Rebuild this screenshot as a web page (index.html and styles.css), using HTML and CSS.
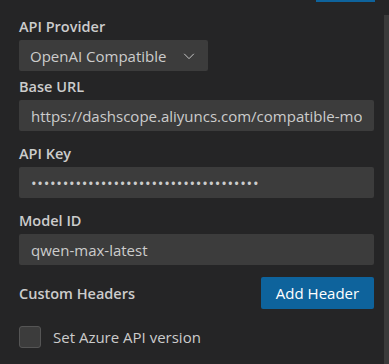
FILE: index.html
```html
<!DOCTYPE html>
<html lang="en">
<head>
    <meta charset="UTF-8">
    <meta name="viewport" content="width=device-width, initial-scale=1.0">
    <title>API Settings</title>
    <link rel="stylesheet" href="styles.css">
</head>
<body>
    <div class="settings-panel">
        <div class="top-button-edge"></div>

        <div class="field field-select">
            <label for="apiProvider">API Provider</label>
            <div class="select-box" id="apiProvider">
                <span>OpenAI Compatible</span>
                <svg class="chevron" width="14" height="14" viewBox="0 0 16 16">
                    <path d="M2.5 5.5 L8 11 L13.5 5.5" fill="none" stroke="#cccccc" stroke-width="1.1"/>
                </svg>
            </div>
        </div>

        <div class="field">
            <label for="baseUrl">Base URL</label>
            <input type="text" id="baseUrl" class="text-input" value="https://dashscope.aliyuncs.com/compatible-mode/v1">
        </div>

        <div class="field">
            <label for="apiKey">API Key</label>
            <input type="password" id="apiKey" class="text-input password" value="sk-0123456789abcdef0123456789abcdef0">
        </div>

        <div class="field">
            <label for="modelId">Model ID</label>
            <input type="text" id="modelId" class="text-input" value="qwen-max-latest">
        </div>

        <div class="headers-row">
            <span class="headers-title">Custom Headers</span>
            <button class="primary-btn">Add Header</button>
        </div>

        <label class="check-row">
            <span class="check-box"></span>
            <span>Set Azure API version</span>
        </label>
    </div>
    <div class="scrollbar"></div>
</body>
</html>
```

FILE: styles.css
```css
body {
    margin: 0;
    background-color: #252526;
    color: #cccccc;
    font-family: "Open Sans", "Noto Sans", sans-serif;
    font-size: 14.5px;
    overflow: hidden;
}

.settings-panel {
    padding: 0 15px 0 19px;
}

.top-button-edge {
    width: 59px;
    height: 2px;
    margin: 0 -1px 0 auto;
    background-color: #0e639c;
}

.field {
    margin-top: 13px;
}

.field-select {
    margin-top: 15px;
}

.field-select + .field {
    margin-top: 6px;
}

.field label {
    display: block;
    font-weight: 600;
    line-height: 20px;
    margin-bottom: 3px;
}

.select-box {
    width: 189px;
    height: 31px;
    box-sizing: border-box;
    padding: 0 11px;
    display: flex;
    align-items: center;
    justify-content: space-between;
    background-color: #3c3c3c;
    border-radius: 2px;
    font-size: 15px;
}

.chevron {
    margin-right: 1px;
}

.text-input {
    display: block;
    width: 100%;
    height: 31px;
    box-sizing: border-box;
    padding: 0 12px;
    border: none;
    border-radius: 2px;
    background-color: #3c3c3c;
    color: #cccccc;
    font-family: inherit;
    font-size: 15px;
    outline: none;
}

.password {
    letter-spacing: 0.7px;
}

.headers-row {
    margin-top: 12px;
    display: flex;
    align-items: center;
    justify-content: space-between;
}

.headers-title {
    font-weight: 600;
}

.primary-btn {
    width: 113px;
    height: 32px;
    border: none;
    border-radius: 2px;
    background-color: #0e639c;
    color: #ffffff;
    font-family: inherit;
    font-size: 15px;
    cursor: pointer;
}

.check-row {
    margin-top: 17px;
    display: flex;
    align-items: center;
    gap: 12px;
    font-size: 15px;
}

.check-box {
    width: 22px;
    height: 22px;
    box-sizing: border-box;
    border: 1px solid #555555;
    border-radius: 3px;
    background-color: #3c3c3c;
}

.scrollbar {
    position: absolute;
    top: 15px;
    right: 0;
    bottom: 0;
    width: 5px;
    background-color: #3a3a3a;
}
```
